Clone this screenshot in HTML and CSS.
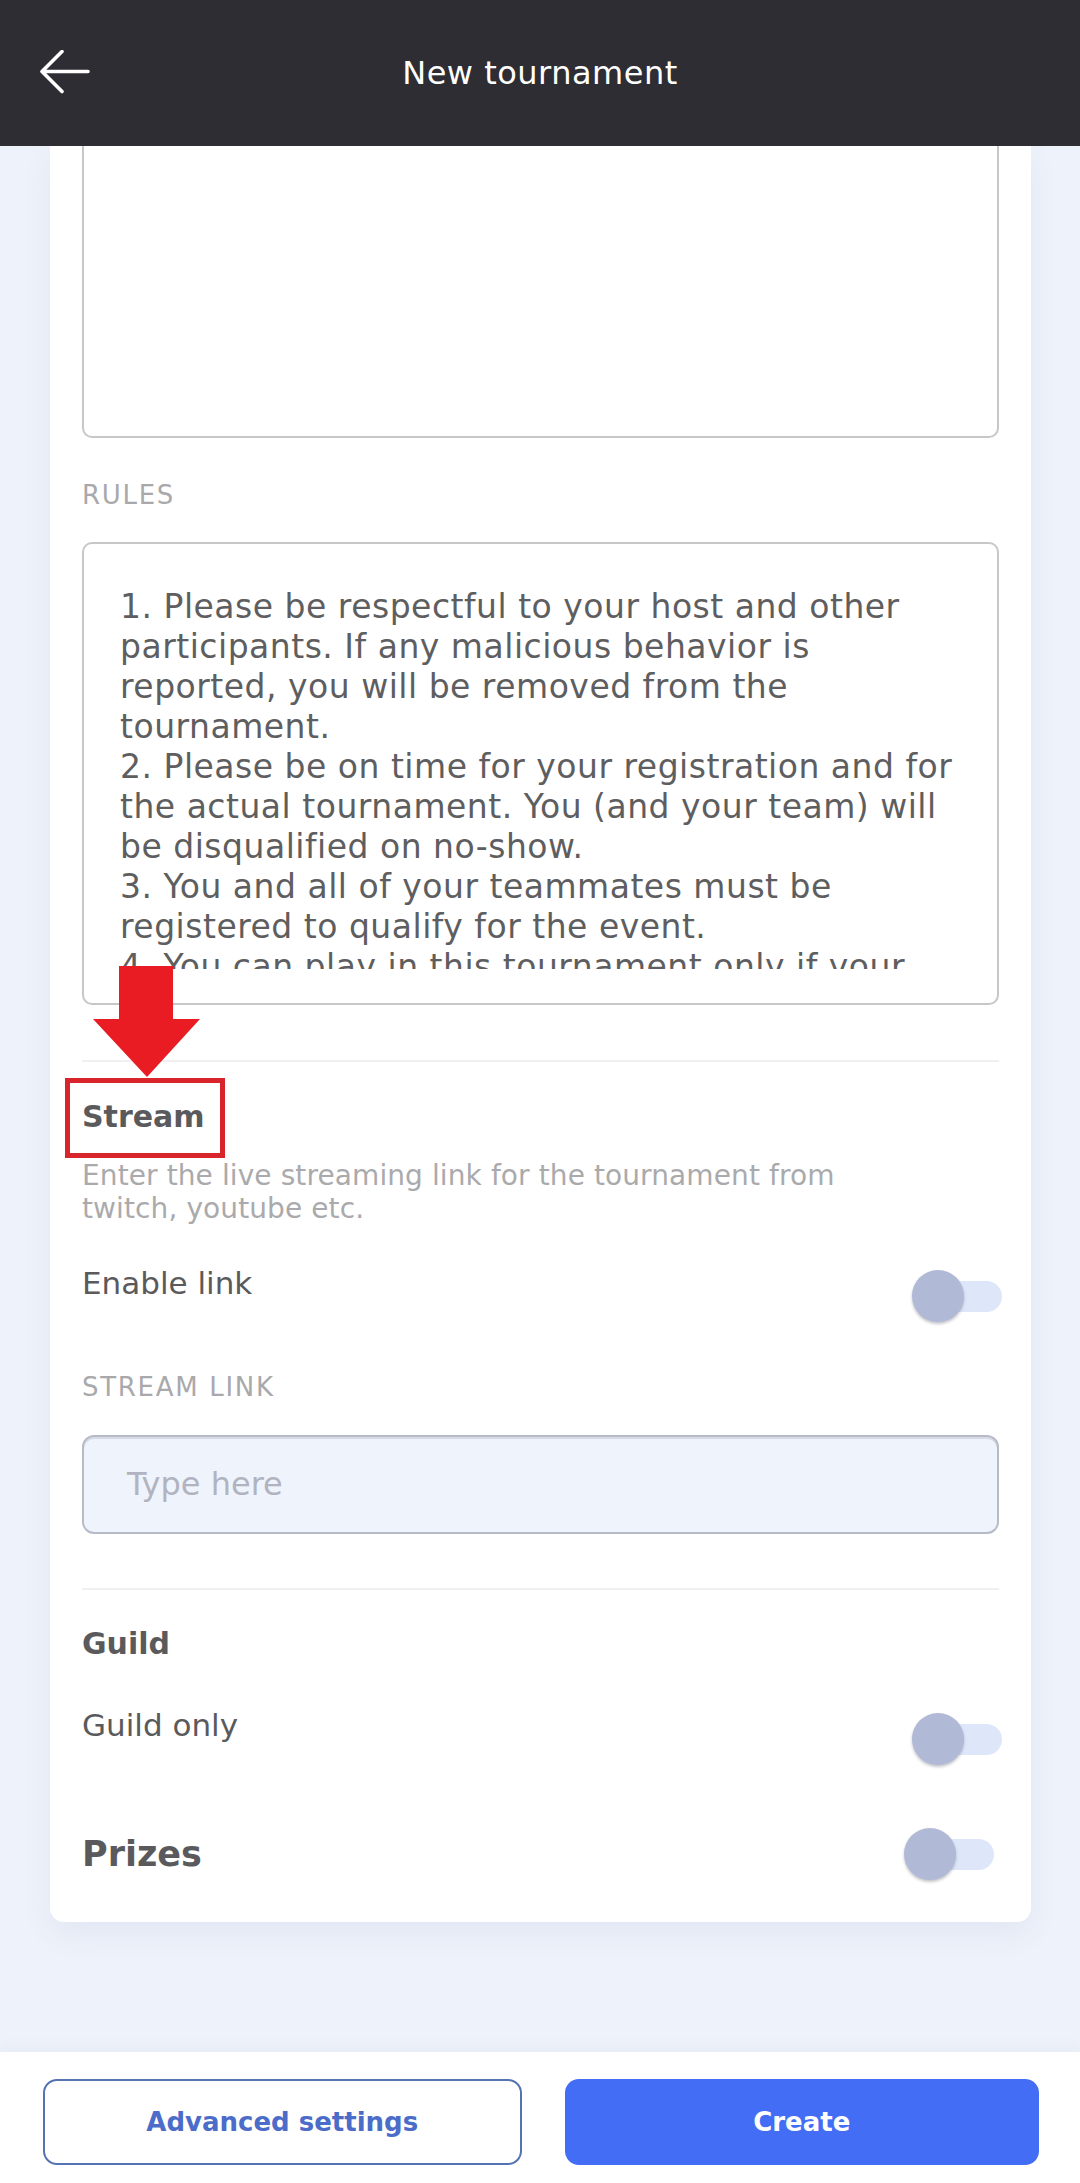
FILE: index.html
```html
<!DOCTYPE html>
<html lang="en">
<head>
<meta charset="utf-8">
<title>New tournament</title>
<link rel="stylesheet" href="styles.css">
</head>
<body>
<div class="app">
  <header class="topbar">
    <div class="topbar-left">
      <svg class="back" viewBox="0 0 50 44" width="50" height="44" aria-hidden="true">
        <path d="M48 21.5 H3 M22 1.5 L2 21.5 L22 41.5" fill="none" stroke="#ffffff" stroke-width="3.6" stroke-linecap="round" stroke-linejoin="round"/>
      </svg>
    </div>
    <h1 class="title">New tournament</h1>
    <div class="topbar-right"></div>
  </header>

  <main class="content">
    <section class="card">
      <div class="textarea textarea-top"></div>

      <div class="label label-rules">RULES</div>
      <div class="textarea textarea-rules">
        <div class="rules-clip">
          <div class="rules-line">1. Please be respectful to your host and other</div>
          <div class="rules-line">participants. If any malicious behavior is</div>
          <div class="rules-line">reported, you will be removed from the</div>
          <div class="rules-line">tournament.</div>
          <div class="rules-line">2. Please be on time for your registration and for</div>
          <div class="rules-line">the actual tournament. You (and your team) will</div>
          <div class="rules-line">be disqualified on no-show.</div>
          <div class="rules-line">3. You and all of your teammates must be</div>
          <div class="rules-line">registered to qualify for the event.</div>
          <div class="rules-line">4. You can play in this tournament only if your</div>
        </div>
      </div>

      <div class="section section-stream">
        <svg class="red-arrow" viewBox="0 0 107 111" width="107" height="111" aria-hidden="true">
          <polygon points="26,0 80,0 80,53 107,53 54,111 0,53 26,53" fill="#e91c24"/>
        </svg>
        <div class="section-title stream-title">
          <span>Stream</span>
          <span class="red-box"></span>
        </div>
        <div class="hint">Enter the live streaming link for the tournament from<br>twitch, youtube etc.</div>
        <div class="row row-enable">
          <div class="row-text">Enable link</div>
          <div class="toggle"><span class="track"></span><span class="knob"></span></div>
        </div>
        <div class="label label-stream">STREAM LINK</div>
        <div class="input"><span class="placeholder">Type here</span></div>
      </div>

      <div class="section section-guild">
        <div class="section-title guild-title">Guild</div>
        <div class="row row-guild">
          <div class="row-text">Guild only</div>
          <div class="toggle"><span class="track"></span><span class="knob"></span></div>
        </div>
        <div class="row row-prizes">
          <div class="prizes-title">Prizes</div>
          <div class="toggle toggle-prizes"><span class="track"></span><span class="knob"></span></div>
        </div>
      </div>
    </section>
  </main>

  <footer class="bottombar">
    <button class="btn btn-outline">Advanced settings</button>
    <button class="btn btn-primary">Create</button>
  </footer>
</div>
</body>
</html>
```

FILE: styles.css
```css
* { box-sizing: border-box; }

html, body {
  margin: 0;
  padding: 0;
}

body {
  font-family: "DejaVu Sans", "Noto Sans", sans-serif;
  background: #eef2fa;
  color: #5a5a5a;
}

.app {
  height: 2183px;
  display: flex;
  flex-direction: column;
  overflow: hidden;
}

/* Header */
.topbar {
  height: 146px;
  flex: 0 0 146px;
  background: #2e2d33;
  display: grid;
  grid-template-columns: 1fr auto 1fr;
  align-items: center;
  position: relative;
  z-index: 2;
}

.topbar-left {
  padding-left: 40px;
  display: flex;
  align-items: center;
  padding-bottom: 3px;
}

.back { display: block; }

.title {
  margin: 0;
  font-size: 32px;
  font-weight: 400;
  color: #ffffff;
  letter-spacing: 0.5px;
  line-height: 40px;
}

/* Content */
.content {
  flex: 1 1 auto;
  padding: 0 49px 0 50px;
  overflow: hidden;
}

.card {
  background: #ffffff;
  border-radius: 0 0 14px 14px;
  padding: 0 32px 42px 32px;
  box-shadow: 0 12px 30px rgba(70, 90, 150, 0.07);
}

.textarea {
  border: 2px solid #c7c7c9;
  border-radius: 10px;
  background: #ffffff;
}

.textarea-top {
  height: 292px;
  border-top: none;
  border-radius: 0 0 10px 10px;
}

.label {
  font-size: 26px;
  line-height: 32px;
  color: #a9a9ab;
  letter-spacing: 1.7px;
}

.label-rules {
  margin-top: 41px;
}

.textarea-rules {
  margin-top: 31px;
  height: 463px;
  padding: 43px 14px 0 36px;
}

.rules-clip {
  height: 382px;
  overflow: hidden;
}

.rules-line {
  font-size: 33px;
  line-height: 40px;
  color: #5e5e60;
  letter-spacing: 0.5px;
  white-space: nowrap;
}

/* Sections */
.section {
  border-top: 2px solid #f0f0f2;
  position: relative;
}

.section-stream {
  margin-top: 55px;
  padding-top: 37px;
}

.red-arrow {
  position: absolute;
  left: 11px;
  top: -96px;
  z-index: 1;
}

.section-title {
  font-size: 30px;
  line-height: 36px;
  font-weight: 700;
  color: #5a5a5c;
  position: relative;
}

.red-box {
  position: absolute;
  left: -17px;
  top: -21px;
  width: 160px;
  height: 80px;
  border: 5px solid #d8252b;
}

.hint {
  margin-top: 24px;
  font-size: 28px;
  line-height: 33px;
  color: #aaaaac;
  letter-spacing: 0.1px;
}

.row {
  display: flex;
  justify-content: space-between;
  align-items: flex-start;
}

.row-text {
  font-size: 31px;
  line-height: 38px;
  color: #5a5a5c;
}

.row-enable {
  margin-top: 39px;
}

.toggle {
  position: relative;
  width: 90px;
  height: 52px;
  margin-top: 6px;
  margin-right: -3px;
  flex: 0 0 90px;
}

.track {
  position: absolute;
  right: 0;
  top: 11px;
  width: 72px;
  height: 31px;
  border-radius: 16px;
  background: #dee7f9;
}

.knob {
  position: absolute;
  left: 0;
  top: 0;
  width: 52px;
  height: 52px;
  border-radius: 50%;
  background: #b0b9d6;
  box-shadow: 0 2px 3px rgba(60, 60, 80, 0.3);
}

.label-stream {
  margin-top: 49px;
}

.input {
  margin-top: 32px;
  height: 99px;
  border: 2px solid #b7bbc7;
  border-radius: 12px;
  background: #eff3fc;
  box-shadow: inset 0 2px 0 #d6dae4;
  display: flex;
  align-items: center;
  padding: 0 0 2px 43px;
}

.placeholder {
  font-size: 32px;
  color: #b1b4c0;
}

.section-guild {
  margin-top: 54px;
  padding-top: 36px;
}

.row-guild {
  margin-top: 44px;
}

.row-guild .toggle {
  margin-top: 7px;
}

.row-prizes {
  margin-top: 63px;
  align-items: center;
  min-height: 52px;
}

.prizes-title {
  font-size: 35px;
  line-height: 42px;
  font-weight: 700;
  color: #5a5a5c;
}

.toggle-prizes {
  margin-top: 0;
  margin-right: 5px;
}

/* Bottom bar */
.bottombar {
  flex: 0 0 131px;
  background: #ffffff;
  display: flex;
  gap: 43px;
  padding: 27px 41px 0 43px;
  box-shadow: 0 -4px 14px rgba(70, 90, 150, 0.05);
  position: relative;
}

.btn {
  flex: 1 1 0;
  height: 86px;
  border-radius: 14px;
  font-family: "DejaVu Sans", "Noto Sans", sans-serif;
  font-size: 26px;
  font-weight: 700;
  cursor: pointer;
}

.btn-outline {
  background: #ffffff;
  border: 2px solid #5573b3;
  color: #4b6cc9;
}

.btn-primary {
  background: #446df6;
  border: none;
  color: #ffffff;
}
```
